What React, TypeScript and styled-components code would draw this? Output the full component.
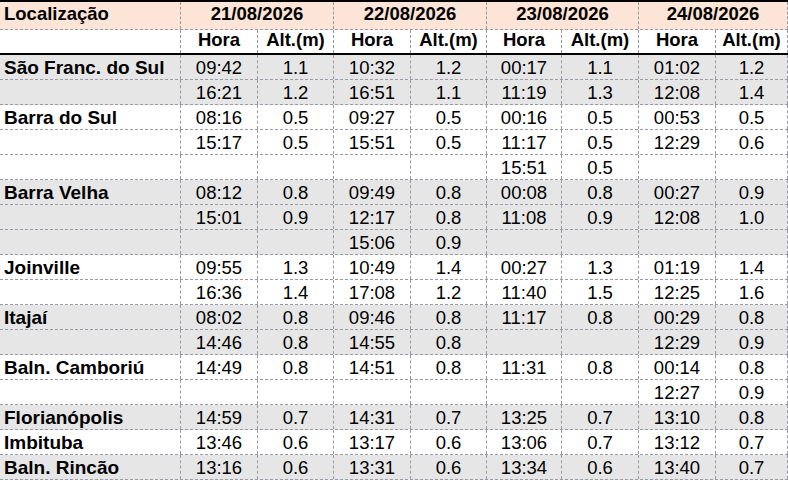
import React from 'react'
import styled, { createGlobalStyle } from 'styled-components'

const GlobalStyle = createGlobalStyle`
html, body {
    margin: 0;
    padding: 0;
    background: #ffffff;
}
body {
    font-family: "Liberation Sans", Arial, sans-serif;
    color: #000000;
}
`

const COLS = '181px 77px 76px 77px 76px 75px 77px 77px 72px'
const GRID = '#9a9aa6'

const Sheet = styled.div`
width: 788px;
height: 480px;
overflow: hidden;
border-top: 2px solid #000;
box-sizing: border-box;
`

const Row = styled.div<{ $bg?: string, $height: number, $thick?: boolean }>`
display: grid;
grid-template-columns: ${COLS};
height: ${p => p.$height}px;
background: ${p => p.$bg || '#ffffff'};
border-bottom: ${p => p.$thick ? '2px solid #000' : `1px dashed ${GRID}`};
box-sizing: border-box;
`

const Cell = styled.div<{ $span?: number, $left?: boolean, $bold?: boolean, $size?: number, $pb?: number }>`
grid-column: span ${p => p.$span || 1};
display: flex;
align-items: flex-end;
justify-content: ${p => p.$left ? 'flex-start' : 'center'};
padding-left: ${p => p.$left ? '4px' : '0'};
padding-bottom: ${p => p.$pb ?? 1}px;
border-right: 1px dashed ${GRID};
font-size: ${p => p.$size || 18.5}px;
line-height: 20px;
font-weight: ${p => p.$bold ? 700 : 400};
white-space: nowrap;
box-sizing: border-box;
`

type Place = { name: string, rows: string[][] }

const e = ['', '']

const places: Place[] = [
    {
        name: 'São Franc. do Sul', rows: [
            ['09:42', '1.1', '10:32', '1.2', '00:17', '1.1', '01:02', '1.2'],
            ['16:21', '1.2', '16:51', '1.1', '11:19', '1.3', '12:08', '1.4'],
        ]
    },
    {
        name: 'Barra do Sul', rows: [
            ['08:16', '0.5', '09:27', '0.5', '00:16', '0.5', '00:53', '0.5'],
            ['15:17', '0.5', '15:51', '0.5', '11:17', '0.5', '12:29', '0.6'],
            [...e, ...e, '15:51', '0.5', ...e],
        ]
    },
    {
        name: 'Barra Velha', rows: [
            ['08:12', '0.8', '09:49', '0.8', '00:08', '0.8', '00:27', '0.9'],
            ['15:01', '0.9', '12:17', '0.8', '11:08', '0.9', '12:08', '1.0'],
            [...e, '15:06', '0.9', ...e, ...e],
        ]
    },
    {
        name: 'Joinville', rows: [
            ['09:55', '1.3', '10:49', '1.4', '00:27', '1.3', '01:19', '1.4'],
            ['16:36', '1.4', '17:08', '1.2', '11:40', '1.5', '12:25', '1.6'],
        ]
    },
    {
        name: 'Itajaí', rows: [
            ['08:02', '0.8', '09:46', '0.8', '11:17', '0.8', '00:29', '0.8'],
            ['14:46', '0.8', '14:55', '0.8', ...e, '12:29', '0.9'],
        ]
    },
    {
        name: 'Baln. Camboriú', rows: [
            ['14:49', '0.8', '14:51', '0.8', '11:31', '0.8', '00:14', '0.8'],
            [...e, ...e, ...e, '12:27', '0.9'],
        ]
    },
    { name: 'Florianópolis', rows: [['14:59', '0.7', '14:31', '0.7', '13:25', '0.7', '13:10', '0.8']] },
    { name: 'Imbituba', rows: [['13:46', '0.6', '13:17', '0.6', '13:06', '0.7', '13:12', '0.7']] },
    { name: 'Baln. Rincão', rows: [['13:16', '0.6', '13:31', '0.6', '13:34', '0.6', '13:40', '0.7']] },
]

const dates = ['21/08/2026', '22/08/2026', '23/08/2026', '24/08/2026']

const App: React.FC = () => {
    return (
        <>
            <GlobalStyle />
            <Sheet>
                <Row $bg='#fce4d6' $height={28}>
                    <Cell $left $bold $pb={5}>Localização</Cell>
                    {dates.map(d => (
                        <Cell key={d} $span={2} $bold $pb={5}>{d}</Cell>
                    ))}
                </Row>
                <Row $height={25} $thick>
                    <Cell />
                    {dates.map(d => (
                        <React.Fragment key={d}>
                            <Cell $bold $pb={3}>Hora</Cell>
                            <Cell $bold $pb={3}>Alt.(m)</Cell>
                        </React.Fragment>
                    ))}
                </Row>
                {places.map((place, i) => {
                    const bg = i % 2 === 0 ? '#e7e6e6' : '#ffffff'
                    return place.rows.map((r, j) => (
                        <Row key={place.name + j} $bg={bg} $height={25}>
                            <Cell $left $bold $size={19}>{j === 0 ? place.name : ''}</Cell>
                            {r.map((v, k) => (
                                <Cell key={k}>{v}</Cell>
                            ))}
                        </Row>
                    ))
                })}
            </Sheet>
        </>
    )
}

export default App
